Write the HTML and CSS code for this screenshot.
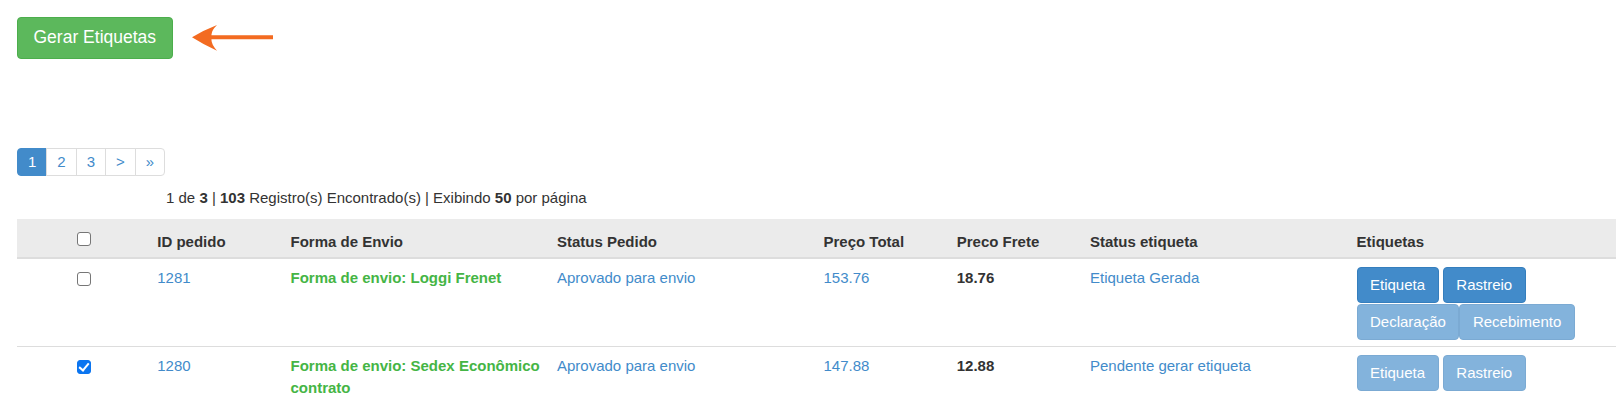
FILE: index.html
```html
<!DOCTYPE html>
<html lang="pt-BR">
<head>
<meta charset="utf-8">
<title>Etiquetas</title>
<link rel="stylesheet" href="styles.css">
</head>
<body>
<div class="page">
  <div class="toolbar">
    <button class="btn-success" type="button">Gerar Etiquetas</button>
    <svg class="pointer" width="83" height="28" viewBox="0 0 83 28" aria-hidden="true">
      <path d="M1 13.3 Q13 6 26 1 Q20 7 20.5 11.3 L82 11.3 L82 15.3 L20.5 15.3 Q20 20 26 26.7 Q13 21 1 13.3 Z" fill="#f36b21"/>
    </svg>
  </div>

  <ul class="pagination">
    <li class="active"><a href="#">1</a></li>
    <li><a href="#">2</a></li>
    <li><a href="#">3</a></li>
    <li><a href="#">&gt;</a></li>
    <li><a href="#">»</a></li>
  </ul>

  <p class="summary">1 de <b>3</b> | <b>103</b> Registro(s) Encontrado(s) | Exibindo <b>50</b> por página</p>

  <table class="grid">
    <colgroup>
      <col class="c1"><col class="c1"><col class="c2"><col class="c2">
      <col class="c1"><col class="c1"><col class="c2"><col class="c2">
    </colgroup>
    <thead>
      <tr>
        <th class="center head-check"><input type="checkbox" class="chk chk-head"></th>
        <th>ID pedido</th>
        <th>Forma de Envio</th>
        <th>Status Pedido</th>
        <th>Preço Total</th>
        <th>Preco Frete</th>
        <th>Status etiqueta</th>
        <th>Etiquetas</th>
      </tr>
    </thead>
    <tbody>
      <tr>
        <td class="center"><input type="checkbox" class="chk"></td>
        <td><a href="#">1281</a></td>
        <td class="ship">Forma de envio: Loggi Frenet</td>
        <td><a href="#">Aprovado para envio</a></td>
        <td><a href="#">153.76</a></td>
        <td><b>18.76</b></td>
        <td><a href="#">Etiqueta Gerada</a></td>
        <td>
          <div class="actions">
            <a href="#" class="btn">Etiqueta</a>
            <a href="#" class="btn">Rastreio</a>
            <a href="#" class="btn is-off glued">Declaração</a>
            <a href="#" class="btn is-off">Recebimento</a>
          </div>
        </td>
      </tr>
      <tr>
        <td class="center"><input type="checkbox" class="chk" checked></td>
        <td><a href="#">1280</a></td>
        <td class="ship">Forma de envio: Sedex Econômico contrato</td>
        <td><a href="#">Aprovado para envio</a></td>
        <td><a href="#">147.88</a></td>
        <td><b>12.88</b></td>
        <td><a href="#">Pendente gerar etiqueta</a></td>
        <td>
          <div class="actions">
            <a href="#" class="btn is-off">Etiqueta</a>
            <a href="#" class="btn is-off">Rastreio</a>
          </div>
        </td>
      </tr>
    </tbody>
  </table>
</div>
</body>
</html>
```

FILE: styles.css
```css
* { box-sizing: border-box; }

html, body {
  margin: 0;
  background: #fff;
}

body {
  font-family: "Liberation Sans", Arial, sans-serif;
  font-size: 15px;
  line-height: 22px;
  color: #333;
}

a {
  color: #428bca;
  text-decoration: none;
}

.page {
  padding: 17px 0 0 17px;
  width: 1616px;
}

.toolbar {
  display: flex;
  align-items: center;
  gap: 18px;
  height: 42px;
}

.btn-success {
  font-family: inherit;
  font-size: 17.5px;
  line-height: 24px;
  padding: 7px 15.5px 9px;
  color: #fff;
  background: #5cb85c;
  border: 1px solid #4cae4c;
  border-radius: 4px;
  cursor: pointer;
}

.pointer {
  display: block;
  margin-top: -1px;
}

.pagination {
  display: flex;
  list-style: none;
  margin: 89px 0 0;
  padding: 0;
}

.pagination li a {
  display: block;
  padding: 2px 10px;
  line-height: 22px;
  font-size: 15px;
  border: 1px solid #ddd;
  margin-left: -1px;
  color: #428bca;
  background: #fff;
}

.pagination li:first-child a {
  margin-left: 0;
  border-radius: 4px 0 0 4px;
}

.pagination li:last-child a {
  border-radius: 0 4px 4px 0;
}

.pagination li.active a {
  background: #428bca;
  border-color: #428bca;
  color: #fff;
}

.summary {
  margin: 11px 0 0;
  padding-left: 149px;
  line-height: 22px;
}

.grid {
  margin-top: 10px;
  width: 1599px;
  table-layout: fixed;
  border-collapse: collapse;
}

.grid .c1 { width: 133.25px; }
.grid .c2 { width: 266.5px; }

.grid th {
  text-align: left;
  font-weight: bold;
  background: #ebebeb;
  padding: 12px 7px 4px;
  line-height: 22px;
  vertical-align: bottom;
  border-bottom: 2px solid #ddd;
}

.grid th.head-check {
  vertical-align: top;
}

.grid td {
  padding: 8px 7px 6px;
  line-height: 22px;
  vertical-align: top;
  border-top: 1px solid #ddd;
}

.grid .center {
  text-align: center;
}

.chk {
  -webkit-appearance: none;
  appearance: none;
  position: relative;
  display: block;
  width: 14px;
  height: 14px;
  margin: 4.5px auto 0;
  border: 1px solid #767676;
  border-radius: 3px;
  background: #fff;
}

.chk:checked {
  background: #0b75f0;
  border-color: #0b75f0;
}

.chk:checked::after {
  content: "";
  position: absolute;
  left: 3.6px;
  top: 0.8px;
  width: 4px;
  height: 8px;
  border: solid #fff;
  border-width: 0 2.2px 2.2px 0;
  transform: rotate(40deg);
}

.chk-head {
  margin-top: 0.7px;
  margin-bottom: 0;
}

.ship {
  color: #45b545;
  font-weight: bold;
}

.actions {
  display: flex;
  flex-wrap: wrap;
  row-gap: 1px;
}

.btn {
  display: block;
  padding: 6px 12.5px;
  line-height: 22px;
  font-size: 15px;
  color: #fff;
  background: #428bca;
  border: 1px solid #357ebd;
  border-radius: 4px;
  margin-right: 4.3px;
  white-space: nowrap;
}

.btn.is-off {
  opacity: 0.65;
}

.btn.glued {
  margin-right: 0;
}
```
